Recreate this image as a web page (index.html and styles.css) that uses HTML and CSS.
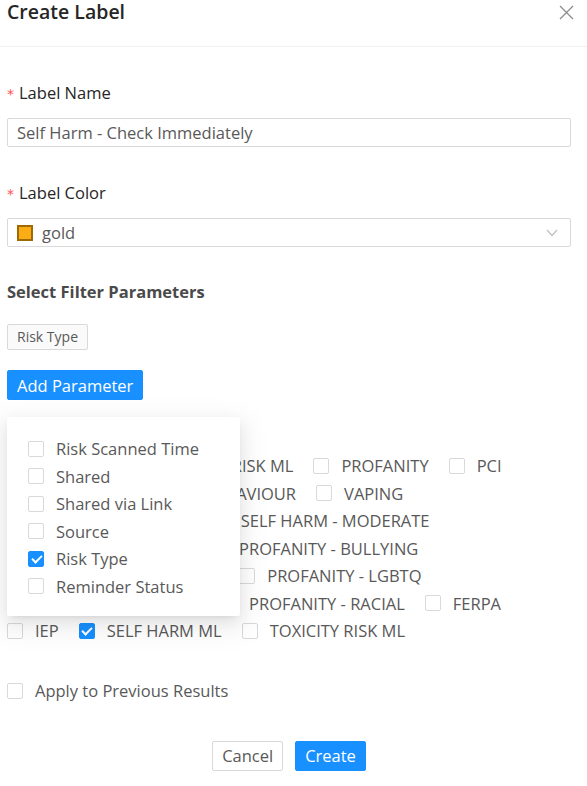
FILE: index.html
```html
<html>
	<head>
		<link rel="stylesheet" href="styles.css">
	</head>
	<body>
		<div class="modal">
			<div class="modal-header">
				<span class="modal-title">Create Label</span>
				<span class="modal-close">
					<svg width="15" height="15" viewBox="0 0 15 15"><path d="M1 1L14 14M14 1L1 14" stroke="#8c8c8c" stroke-width="1.3" fill="none"/></svg>
				</span>
			</div>
			<div class="modal-body">
				<div class="form-item">
					<div class="form-label"><span class="req">*</span>Label Name</div>
					<div class="input">Self Harm - Check Immediately</div>
				</div>
				<div class="form-item">
					<div class="form-label"><span class="req">*</span>Label Color</div>
					<div class="input select">
						<span class="swatch"></span>
						<span class="select-value">gold</span>
						<svg class="arrow" width="12" height="8" viewBox="0 0 12 8"><path d="M1 1L6 6.5L11 1" stroke="#bfbfbf" stroke-width="1.2" fill="none"/></svg>
					</div>
				</div>

				<div class="section-title">Select Filter Parameters</div>
				<div class="tags">
					<span class="tag">Risk Type</span>
				</div>

				<div class="params">
					<button class="btn btn-primary">Add Parameter</button>

					<div class="check-group">
						<label class="check"><span class="box"></span>SUBSTANCE</label>
						<label class="check"><span class="box"></span>ADULT RISK ML</label>
						<label class="check"><span class="box"></span>PROFANITY</label>
						<label class="check"><span class="box"></span>PCI</label>
						<label class="check"><span class="box"></span>DRUGS</label>
						<label class="check"><span class="box"></span>UNSAFE BEHAVIOUR</label>
						<label class="check"><span class="box"></span>VAPING</label>
						<label class="check"><span class="box"></span>SELF HARM - SEVERE</label>
						<label class="check"><span class="box"></span>SELF HARM - MODERATE</label>
						<label class="check"><span class="box"></span>SELF HARM - MINOR</label>
						<label class="check"><span class="box"></span>PROFANITY - BULLYING</label>
						<label class="check"><span class="box"></span>PROFANITY - RELIGIOUS</label>
						<label class="check"><span class="box"></span>PROFANITY - LGBTQ</label>
						<label class="check"><span class="box"></span>PROFANITY - GENDER</label>
						<label class="check"><span class="box"></span>PROFANITY - RACIAL</label>
						<label class="check"><span class="box"></span>FERPA</label>
						<label class="check"><span class="box"></span>IEP</label>
						<label class="check"><span class="box checked"></span>SELF HARM ML</label>
						<label class="check"><span class="box"></span>TOXICITY RISK ML</label>
					</div>

					<div class="dropdown">
						<label class="check"><span class="box"></span>Risk Scanned Time</label>
						<label class="check"><span class="box"></span>Shared</label>
						<label class="check"><span class="box"></span>Shared via Link</label>
						<label class="check"><span class="box"></span>Source</label>
						<label class="check"><span class="box checked"></span>Risk Type</label>
						<label class="check"><span class="box"></span>Reminder Status</label>
					</div>
				</div>

				<label class="check apply"><span class="box"></span>Apply to Previous Results</label>

				<div class="modal-footer">
					<button class="btn">Cancel</button>
					<button class="btn btn-primary">Create</button>
				</div>
			</div>
		</div>
	</body>
</html>
```

FILE: styles.css
```css
body{
	margin: 0;
	background-color: #ffffff;
	font-family: "Open Sans", "Noto Sans", sans-serif;
	font-size: 16.5px;
	color: #595959;
}
.modal-header{
	display: flex;
	justify-content: space-between;
	align-items: flex-start;
	height: 46px;
	padding: 0 13px 0 7px;
	border-bottom: 1px solid #f0f0f0;
}
.modal-title{
	font-size: 19.5px;
	font-weight: 600;
	line-height: 26px;
	margin-top: -1px;
	color: #262626;
}
.modal-close{
	padding-top: 5px;
	line-height: 0;
}
.modal-body{
	padding: 34px 16px 0 7px;
}
.form-item{
	margin-bottom: 34px;
}
.form-label{
	line-height: 24px;
	margin-bottom: 12px;
	color: #262626;
}
.req{
	color: #ff4d4f;
	margin-right: 5px;
	font-family: "DejaVu Sans", sans-serif;
	font-size: 14px;
}
.input{
	box-sizing: border-box;
	height: 29px;
	line-height: 27px;
	padding: 0 9px;
	border: 1px solid #d9d9d9;
	border-radius: 2px;
}
.select{
	display: flex;
	align-items: center;
}
.swatch{
	box-sizing: border-box;
	width: 16px;
	height: 16px;
	background-color: #faad14;
	border: 2px solid #9e6a03;
	margin-right: 9px;
}
.select-value{
	flex: 1;
}
.arrow{
	margin-right: 3px;
}
.section-title{
	font-weight: 700;
	line-height: 24px;
	margin-top: -1px;
	color: #4a4a4a;
}
.tags{
	margin-top: 20px;
	line-height: 0;
}
.tag{
	display: inline-block;
	box-sizing: border-box;
	height: 26px;
	line-height: 24px;
	padding: 0 9px;
	font-size: 14px;
	background-color: #fafafa;
	border: 1px solid #d9d9d9;
	border-radius: 2px;
}
.params{
	position: relative;
	margin-top: 20px;
}
.btn{
	box-sizing: border-box;
	height: 30px;
	padding: 0 9px;
	font-family: inherit;
	font-size: 16.5px;
	color: #595959;
	background-color: #ffffff;
	border: 1px solid #d9d9d9;
	border-radius: 2px;
	cursor: pointer;
}
.btn-primary{
	color: #ffffff;
	background-color: #1890ff;
	border-color: #1890ff;
}
.check-group{
	display: flex;
	flex-wrap: wrap;
	column-gap: 20px;
	margin: 52px 20px 0 0;
}
.check{
	display: flex;
	align-items: center;
	height: 27.5px;
	white-space: nowrap;
}
.box{
	position: relative;
	box-sizing: border-box;
	width: 16px;
	height: 16px;
	margin-right: 12px;
	border: 1px solid #d9d9d9;
	border-radius: 2px;
	background-color: #ffffff;
}
.box.checked{
	background-color: #1890ff;
	border-color: #1890ff;
}
.box.checked::after{
	content: "";
	position: absolute;
	left: 4.5px;
	top: 1.5px;
	width: 4px;
	height: 8px;
	border: 2px solid #ffffff;
	border-top: 0;
	border-left: 0;
	transform: rotate(45deg);
}
.dropdown{
	position: absolute;
	top: 47px;
	left: 0;
	box-sizing: border-box;
	width: 233px;
	height: 199px;
	padding: 18px 21px 0 21px;
	background-color: #ffffff;
	border-radius: 2px;
	box-shadow: 0 3px 6px -4px rgba(0,0,0,.12), 0 6px 16px 0 rgba(0,0,0,.08), 0 9px 28px 8px rgba(0,0,0,.05);
}
.apply{
	height: 24px;
	margin-top: 34px;
}
.modal-footer{
	display: flex;
	justify-content: center;
	gap: 12px;
	margin-top: 38px;
}
```
